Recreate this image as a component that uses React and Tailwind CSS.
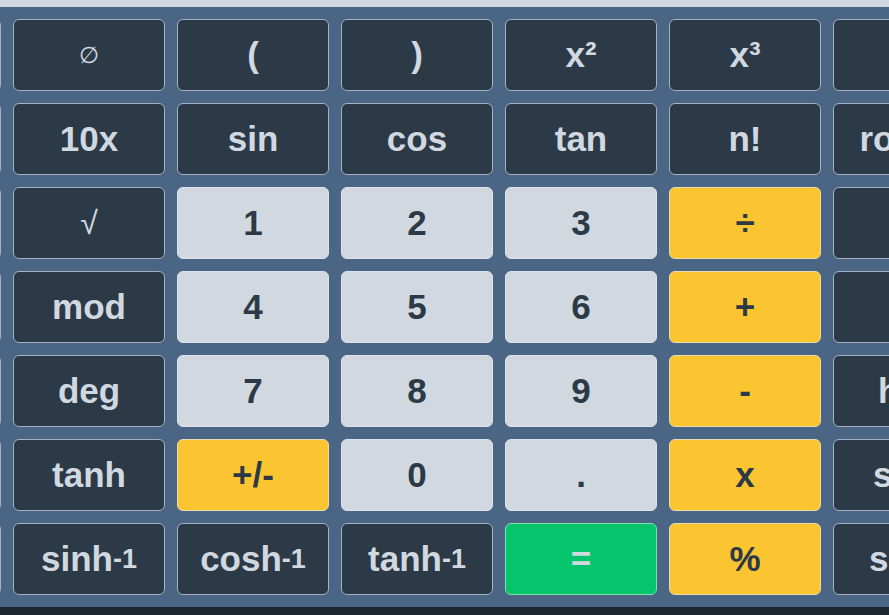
import React from 'react';

// kinds: d = dark function key, l = light digit key, y = operator, g = equals
const rows = [
    [['C', 'd'], ['∅', 'd', 'sym'], ['(', 'd'], [')', 'd'], ['x²', 'd'], ['x³', 'd'], ['e', 'd']],
    [['π', 'd'], ['10x', 'd'], ['sin', 'd'], ['cos', 'd'], ['tan', 'd'], ['n!', 'd'], ['round', 'd']],
    [['log', 'd'], ['√', 'd', 'root'], ['1', 'l'], ['2', 'l'], ['3', 'l'], ['÷', 'y'], ['π', 'd']],
    [['ln', 'd'], ['mod', 'd'], ['4', 'l'], ['5', 'l'], ['6', 'l'], ['+', 'y'], ['ln', 'd']],
    [['exp', 'd'], ['deg', 'd'], ['7', 'l'], ['8', 'l'], ['9', 'l'], ['-', 'y'], ['hyp', 'd']],
    [['sinh', 'd'], ['tanh', 'd'], ['+/-', 'y'], ['0', 'l'], ['.', 'l'], ['x', 'y'], ['sinh', 'd']],
    [['cosh', 'd'], ['sinh', 'd', 'inv'], ['cosh', 'd', 'inv'], ['tanh', 'd', 'inv'], ['=', 'g'], ['%', 'y'], ['sech', 'd']],
];

const kindClass = {
    d: 'bg-[#2c3a47] text-[#d1d8e0] border-[#a5b1c2]',
    l: 'bg-[#d1d8e0] text-[#2c3a47] border-[#dfe4ea]',
    y: 'bg-[#fbc531] text-[#2c3a47] border-[#e8dcb0]',
    g: 'bg-[#05c46b] text-[#d1d8e0] border-[#7fe0b0]',
};

const Key = ({ label, kind, extra }) => {
    let content = label;
    if (extra === 'inv') {
        content = (
            <>
                {label}
                <span className="text-[27px]">-1</span>
            </>
        );
    } else if (extra === 'sym') {
        content = <span className="text-[23px] font-normal">{label}</span>;
    } else if (extra === 'root') {
        content = <span className="text-[32px] font-normal">{label}</span>;
    }

    return (
        <button className={`h-[72px] rounded-md border flex items-center justify-center whitespace-nowrap overflow-hidden font-bold text-[35px] ${kindClass[kind]}`}>
            {content}
        </button>
    );
};

const App = () => {
    return (
        <div className="w-[889px] h-[615px] overflow-hidden flex flex-col bg-[#1e272e] font-['Liberation_Sans',Arial,sans-serif]">
            <div className="h-[7px] bg-[#d1d8e0] shrink-0"></div>
            <div className="bg-[#4b6584] py-3 shrink-0">
                <div className="grid grid-cols-[repeat(7,152px)] gap-3 -ml-[151px] w-max">
                    {rows.map((row, i) =>
                        row.map(([label, kind, extra], j) => (
                            <Key key={`${i}-${j}`} label={label} kind={kind} extra={extra} />
                        ))
                    )}
                </div>
            </div>
        </div>
    );
};

export default App;
